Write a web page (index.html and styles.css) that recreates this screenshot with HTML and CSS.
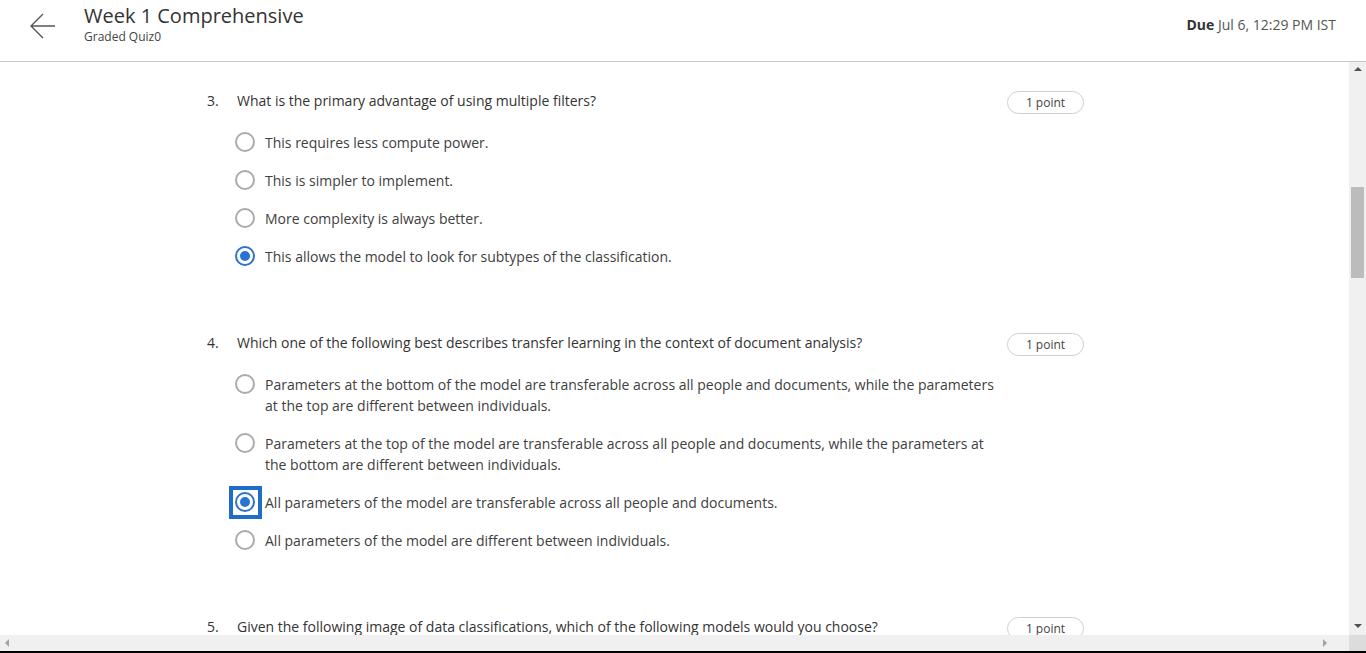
FILE: index.html
```html
<!DOCTYPE html>
<html lang="en">
<head>
<meta charset="utf-8">
<title>Week 1 Comprehensive</title>
<link rel="stylesheet" href="styles.css">
</head>
<body>
<div class="page">
  <header class="header">
    <div class="header-left">
      <button class="back" aria-label="Back">
        <svg width="28" height="28" viewBox="0 0 28 28"><path d="M27 14H4M15 2L3 14l12 12" fill="none" stroke="#555" stroke-width="1.4"/></svg>
      </button>
      <div class="titles">
        <div class="title">Week 1 Comprehensive</div>
        <div class="subtitle">Graded Quiz0</div>
      </div>
    </div>
    <div class="due"><b>Due</b> Jul 6, 12:29 PM IST</div>
  </header>
  <div class="body-row">
    <main class="content">
      <section class="question">
        <div class="q-head">
          <span class="q-num">3.</span>
          <span class="q-text">What is the primary advantage of using multiple filters?</span>
          <span class="badge">1 point</span>
        </div>
        <ul class="options">
          <li class="option"><span class="radio"></span><span class="opt-text">This requires less compute power.</span></li>
          <li class="option"><span class="radio"></span><span class="opt-text">This is simpler to implement.</span></li>
          <li class="option"><span class="radio"></span><span class="opt-text">More complexity is always better.</span></li>
          <li class="option"><span class="radio checked"></span><span class="opt-text">This allows the model to look for subtypes of the classification.</span></li>
        </ul>
      </section>
      <section class="question">
        <div class="q-head">
          <span class="q-num">4.</span>
          <span class="q-text">Which one of the following best describes transfer learning in the context of document analysis?</span>
          <span class="badge">1 point</span>
        </div>
        <ul class="options">
          <li class="option"><span class="radio"></span><span class="opt-text">Parameters at the bottom of the model are transferable across all people and documents, while the parameters at the top are different between individuals.</span></li>
          <li class="option"><span class="radio"></span><span class="opt-text">Parameters at the top of the model are transferable across all people and documents, while the parameters at the bottom are different between individuals.</span></li>
          <li class="option"><span class="radio checked focused"></span><span class="opt-text">All parameters of the model are transferable across all people and documents.</span></li>
          <li class="option"><span class="radio"></span><span class="opt-text">All parameters of the model are different between individuals.</span></li>
        </ul>
      </section>
      <section class="question">
        <div class="q-head">
          <span class="q-num">5.</span>
          <span class="q-text">Given the following image of data classifications, which of the following models would you choose?</span>
          <span class="badge">1 point</span>
        </div>
      </section>
    </main>
    <div class="vscroll">
      <span class="arrow-up"></span>
      <span class="thumb"></span>
      <span class="arrow-down"></span>
    </div>
  </div>
  <div class="hscroll">
    <div class="htrack">
      <span class="arrow-left"></span>
      <span class="arrow-right"></span>
    </div>
    <div class="corner"></div>
  </div>
  <div class="bottom-line"></div>
</div>
</body>
</html>
```
FILE: styles.css
```css
* { box-sizing: border-box; }
html, body { margin: 0; padding: 0; }
body {
  font-family: "Open Sans", "DejaVu Sans", sans-serif;
  color: #333;
  background: #fff;
  overflow: hidden;
}
.page {
  width: 1366px;
  height: 653px;
  display: flex;
  flex-direction: column;
}
.header {
  height: 62px;
  flex: none;
  border-bottom: 1px solid #c8c8c8;
  display: flex;
  justify-content: space-between;
  align-items: flex-start;
  padding: 0 30px 0 28px;
}
.header-left {
  display: flex;
  align-items: flex-start;
}
.back {
  border: 0;
  background: none;
  padding: 0;
  margin-top: 12px;
  width: 28px;
  height: 28px;
  cursor: pointer;
}
.back svg { display: block; }
.titles {
  margin-left: 28px;
  padding-top: 2px;
}
.title {
  font-size: 20px;
  line-height: 28px;
  color: #333;
}
.subtitle {
  font-size: 12px;
  line-height: 16px;
  color: #444;
  margin-top: -1px;
}
.due {
  font-size: 14px;
  line-height: 18px;
  color: #555;
  margin-top: 16px;
}
.due b { color: #333; font-weight: 700; }

.body-row {
  flex: none;
  height: 573px;
  display: flex;
}
.content {
  flex: 1;
  overflow: hidden;
  padding: 28px 0 0 207px;
}
.question {
  width: 877px;
  margin-bottom: 65px;
}
.q-head {
  display: flex;
  align-items: flex-start;
  font-size: 14px;
  line-height: 21px;
  height: 21px;
}
.q-num {
  width: 30px;
  flex: none;
}
.q-text { flex: 1; }
.badge {
  flex: none;
  width: 77px;
  height: 23px;
  border: 1px solid #cfcfcf;
  border-radius: 12px;
  font-size: 12px;
  line-height: 21px;
  text-align: center;
  color: #444;
  margin-top: 1px;
}
.options {
  list-style: none;
  margin: 21px 0 0 28px;
  padding: 0;
  display: flex;
  flex-direction: column;
  gap: 17px;
}
.option {
  display: flex;
  align-items: flex-start;
  font-size: 14px;
  line-height: 21px;
}
.radio {
  flex: none;
  width: 20px;
  height: 20px;
  margin-top: 0;
  border: 2px solid #ababab;
  border-radius: 50%;
  position: relative;
}
.radio.checked {
  border-color: #2a73d0;
}
.radio.checked::after {
  content: "";
  position: absolute;
  left: 3px;
  top: 3px;
  width: 10px;
  height: 10px;
  border-radius: 50%;
  background: #2a73d0;
}
.radio.focused::before {
  content: "";
  position: absolute;
  left: -8px;
  top: -8px;
  right: -9px;
  bottom: -9px;
  border: 4px solid #1f6cc9;
}
.opt-text {
  margin-left: 10px;
  width: 735px;
  color: #404040;
}

.vscroll {
  flex: none;
  width: 17px;
  background: #f0f0f0;
  display: flex;
  flex-direction: column;
  align-items: center;
  padding: 5px 0 4px;
}
.arrow-up {
  width: 0; height: 0;
  border-left: 4px solid transparent;
  border-right: 4px solid transparent;
  border-bottom: 4px solid #505050;
}
.thumb {
  width: 13px;
  height: 91px;
  background: #bcbcbc;
  margin-top: 116px;
}
.arrow-down {
  margin-top: auto;
  margin-bottom: 3px;
  width: 0; height: 0;
  border-left: 4px solid transparent;
  border-right: 4px solid transparent;
  border-top: 4px solid #505050;
}
.hscroll {
  flex: none;
  height: 16px;
  display: flex;
}
.htrack {
  flex: 1;
  background: #f0f0f0;
  display: flex;
  justify-content: space-between;
  align-items: center;
  padding: 0 22px 0 5px;
}
.arrow-left {
  width: 0; height: 0;
  border-top: 4px solid transparent;
  border-bottom: 4px solid transparent;
  border-right: 4px solid #a3a3a3;
}
.arrow-right {
  width: 0; height: 0;
  border-top: 4px solid transparent;
  border-bottom: 4px solid transparent;
  border-left: 4px solid #a3a3a3;
}
.corner {
  width: 17px;
  background: #dcdcdc;
}
.bottom-line {
  flex: none;
  height: 2px;
  background: #000;
}
```
